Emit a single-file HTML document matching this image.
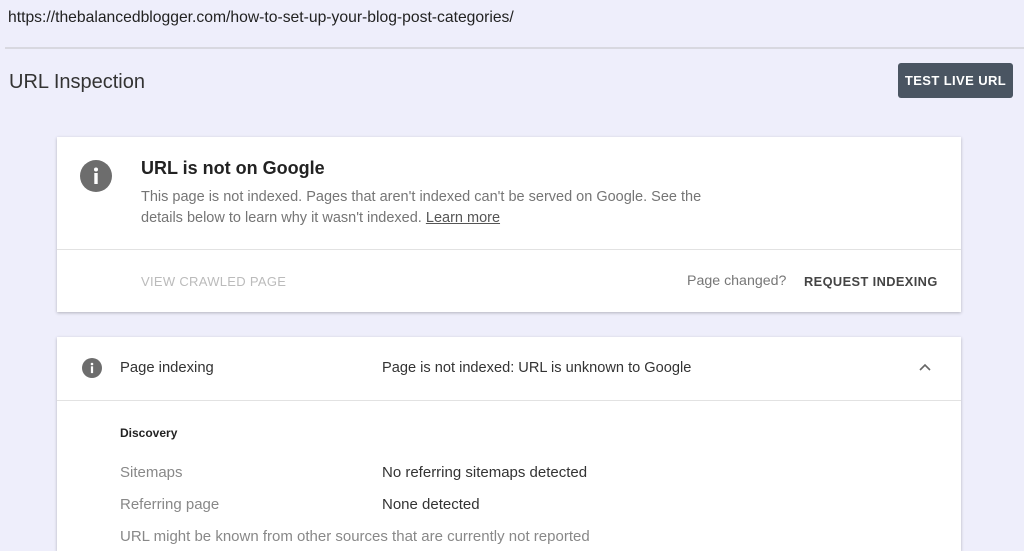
<!DOCTYPE html>
<html><head><style>
html,body{margin:0;width:1024px;height:551px;overflow:hidden}
body{background:#eeeefb;font-family:"Liberation Sans",sans-serif;position:relative}
.a{position:absolute;white-space:nowrap}
.card{position:absolute;left:57px;width:904px;background:#fff;box-shadow:0 1px 3px rgba(0,0,0,.25)}
</style></head><body>
<div class="a" style="left:8px;top:9px;font-size:15.7px;color:#222">https://thebalancedblogger.com/how-to-set-up-your-blog-post-categories/</div>
<div class="a" style="left:5px;top:47px;width:1019px;height:2px;background:#d8d8e0"></div>
<div class="a" style="left:9px;top:71px;font-size:20px;color:#333">URL Inspection</div>
<div class="a" style="left:898px;top:63px;width:115px;height:35px;background:#4a5562;border-radius:3px;color:#fff;font-size:13px;font-weight:bold;letter-spacing:.4px;text-align:center;line-height:35px">TEST LIVE URL</div>

<div class="card" style="top:137px;height:175px">
  <svg class="a" style="left:23px;top:23px" width="32" height="32" viewBox="0 0 32 32"><circle cx="16" cy="16" r="16" fill="#6d6d6d"/><circle cx="16" cy="9.5" r="2" fill="#fff"/><rect x="14.3" y="13" width="3.4" height="11" fill="#fff"/></svg>
  <div class="a" style="left:84px;top:21px;font-size:18px;font-weight:bold;color:#222">URL is not on Google</div>
  <div class="a" style="left:84px;top:50px;font-size:14.5px;color:#757575;line-height:21px">This page is not indexed. Pages that aren't indexed can't be served on Google. See the<br>details below to learn why it wasn't indexed. <span style="text-decoration:underline;color:#555">Learn more</span></div>
  <div class="a" style="left:0;top:112px;width:904px;height:1px;background:#e2e2e2"></div>
  <div class="a" style="left:84px;top:137px;font-size:13px;color:#bbb;letter-spacing:.3px">VIEW CRAWLED PAGE</div>
  <div class="a" style="left:630px;top:136px;font-size:14.2px;color:#777">Page changed?</div>
  <div class="a" style="left:747px;top:137px;font-size:12.8px;color:#444;font-weight:bold;letter-spacing:.4px">REQUEST INDEXING</div>
</div>

<div class="card" style="top:337px;height:214px">
  <svg class="a" style="left:25px;top:21px" width="20" height="20" viewBox="0 0 20 20"><circle cx="10" cy="10" r="10" fill="#6d6d6d"/><circle cx="10" cy="6" r="1.3" fill="#fff"/><rect x="8.9" y="8.3" width="2.2" height="6.8" fill="#fff"/></svg>
  <div class="a" style="left:63px;top:23px;font-size:14.8px;color:#333">Page indexing</div>
  <div class="a" style="left:325px;top:23px;font-size:14.6px;color:#333">Page is not indexed: URL is unknown to Google</div>
  <svg class="a" style="left:862px;top:26px" width="12" height="8" viewBox="0 0 12 8"><path d="M1 7L6 2L11 7" stroke="#666" stroke-width="1.6" fill="none"/></svg>
  <div class="a" style="left:0;top:63px;width:904px;height:1px;background:#e2e2e2"></div>
  <div class="a" style="left:63px;top:89px;font-size:12px;color:#222;font-weight:bold">Discovery</div>
  <div class="a" style="left:63px;top:127px;font-size:15px;color:#888">Sitemaps</div>
  <div class="a" style="left:325px;top:127px;font-size:15px;color:#333">No referring sitemaps detected</div>
  <div class="a" style="left:63px;top:159px;font-size:15px;color:#888">Referring page</div>
  <div class="a" style="left:325px;top:159px;font-size:15px;color:#333">None detected</div>
  <div class="a" style="left:63px;top:191px;font-size:15px;color:#888">URL might be known from other sources that are currently not reported</div>
</div>
</body></html>
